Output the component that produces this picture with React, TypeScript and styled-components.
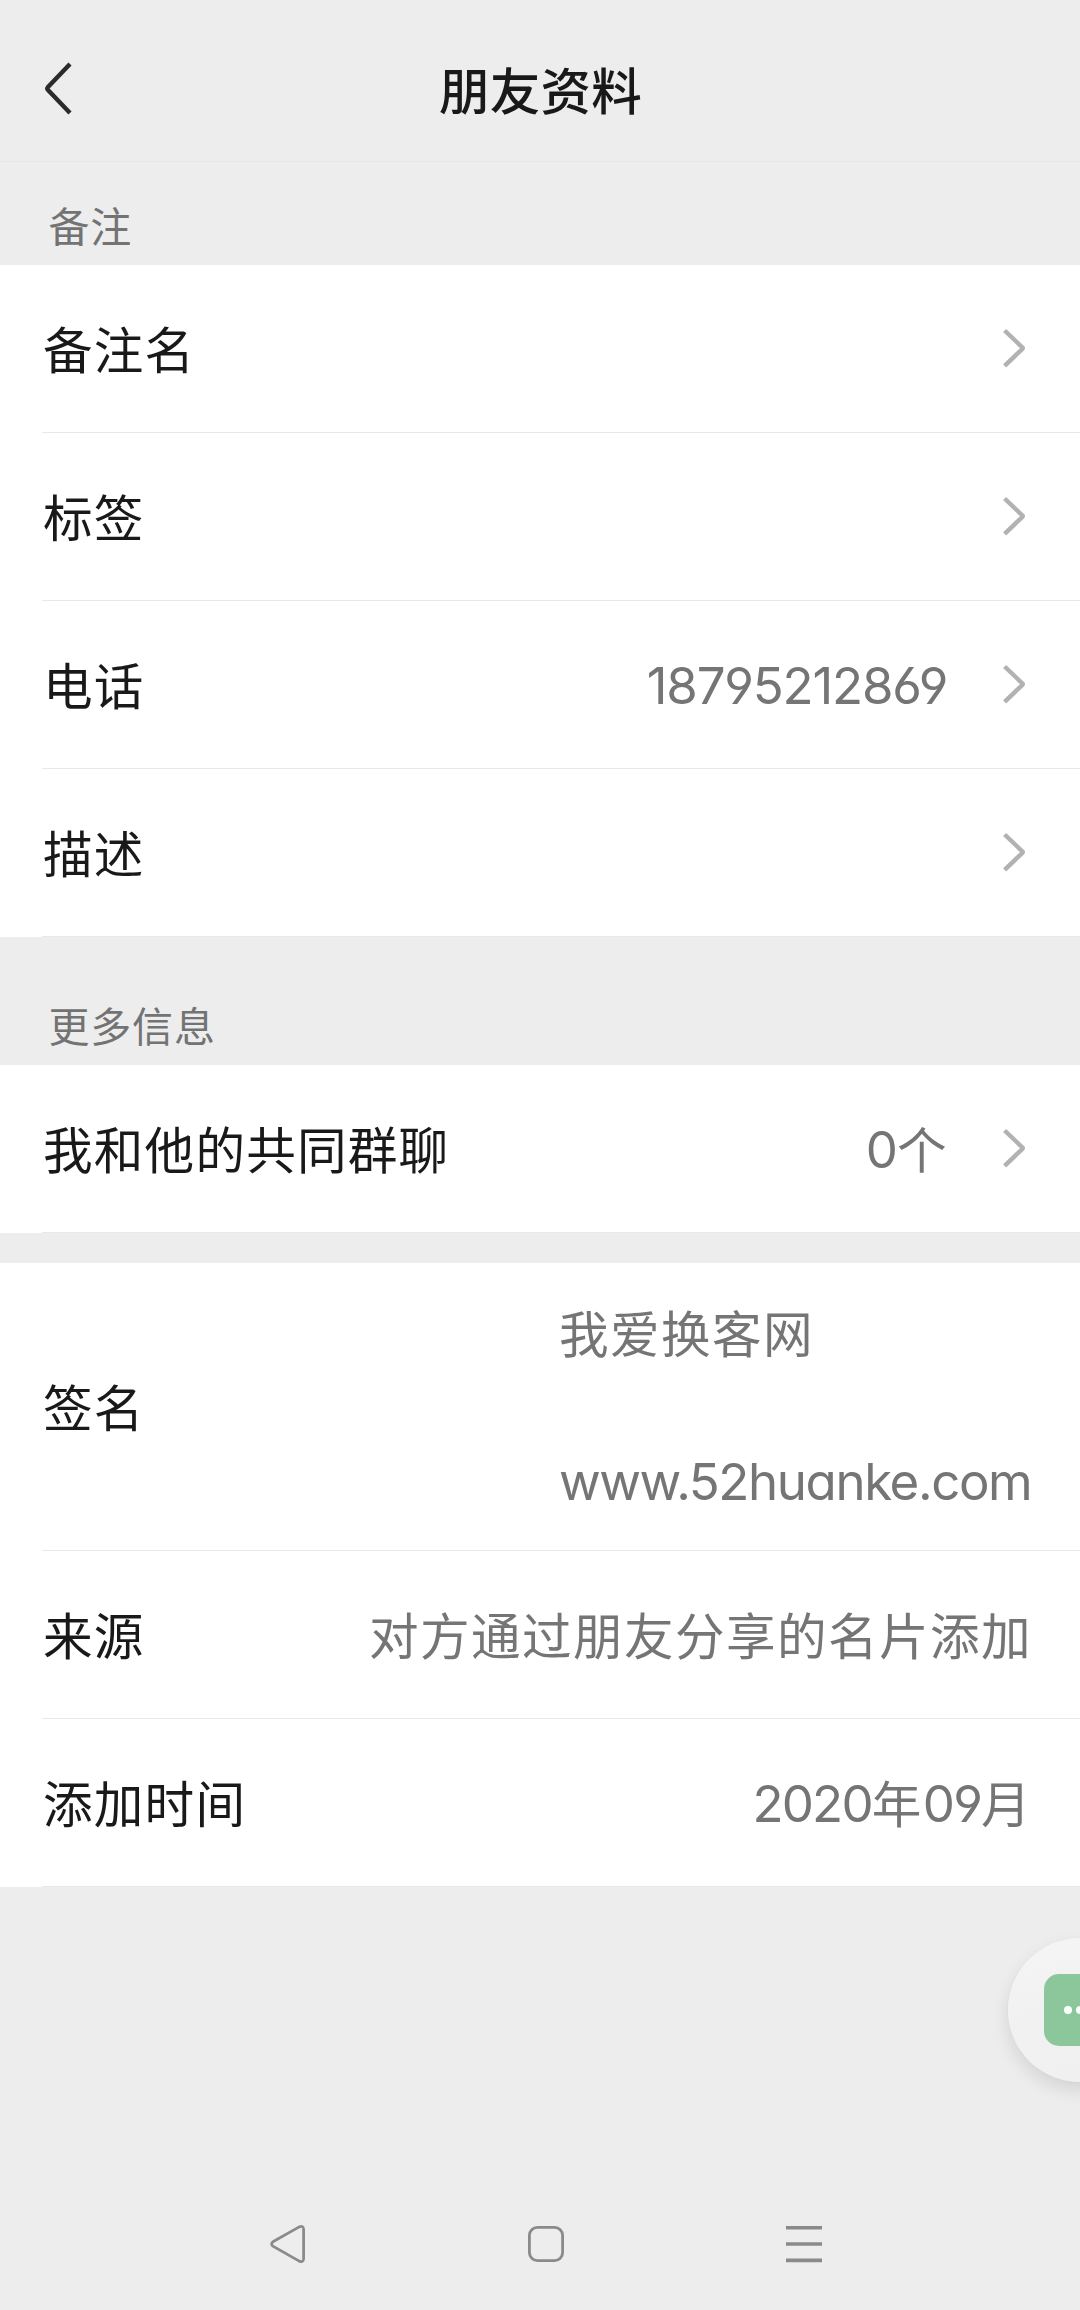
import React from "react";
import styled, { createGlobalStyle } from "styled-components";

const GlobalStyle = createGlobalStyle`
  * { box-sizing: border-box; }
  body {
    margin: 0;
    background: #ededed;
    font-family: "Noto Sans CJK SC", "Noto Sans", sans-serif;
  }
`;

const Screen = styled.div`
  position: relative;
  display: flex;
  flex-direction: column;
  width: 1080px;
  height: 2310px;
  overflow: hidden;
  background: #ededed;
  color: #191919;
`;

const Header = styled.header`
  display: grid;
  grid-template-columns: 120px 1fr 120px;
  align-items: center;
  height: 162px;
  padding-top: 17px;
  border-bottom: 1px solid #e6e6e6;
`;

const BackButton = styled.button`
  display: flex;
  width: 120px;
  height: 72px;
  padding: 0 0 0 42px;
  border: 0;
  background: none;
  align-items: center;
`;

const Title = styled.h1`
  margin: 0 0 0 1px;
  padding-bottom: 2px;
  text-align: center;
  font-size: 50.5px;
  font-weight: 500;
  line-height: 72px;
  letter-spacing: 0.3px;
`;

const SectionLabel = styled.h2<{ $height: number }>`
  display: flex;
  align-items: flex-end;
  height: ${(p) => p.$height}px;
  margin: 0;
  padding: 0 0 12px 48.5px;
  font-size: 41px;
  font-weight: 400;
  line-height: 58px;
  letter-spacing: 0.8px;
  color: #737373;
`;

const Group = styled.section<{ $gap?: number }>`
  margin-top: ${(p) => p.$gap ?? 0}px;
  background: #fff;
`;

const Row = styled.div<{ $height?: number; $link?: boolean }>`
  display: flex;
  justify-content: space-between;
  height: ${(p) => p.$height ?? 168}px;
  margin-left: 42px;
  padding-left: 1px;
  padding-right: ${(p) => (p.$link ? 54 : 48)}px;
  align-items: center;
  border-bottom: 1px solid #e8e8e8;
`;

const Label = styled.span`
  padding-bottom: 4px;
  font-size: 49.6px;
  line-height: 72px;
  letter-spacing: 1.2px;
`;

const Side = styled.div`
  display: flex;
  align-items: center;
  gap: 54px;
`;

const Value = styled.span`
  padding-bottom: 4px;
  font-size: 49.6px;
  line-height: 72px;
  letter-spacing: 1.4px;
  color: #757575;
`;

const Latin = styled.span<{ $track?: number; $end?: number }>`
  margin-right: ${(p) => p.$end ?? 0}px;
  font-family: Inter, "Noto Sans", sans-serif;
  font-size: 51px;
  font-weight: 370;
  line-height: 1;
  vertical-align: 1px;
  font-feature-settings: "cv11" 1, "ss01" 1;
  letter-spacing: ${(p) => p.$track ?? -1.8}px;
`;

const Signature = styled.div`
  display: flex;
  flex-direction: column;
  gap: 72px;
`;

const Bubble = styled.div`
  position: absolute;
  top: 1938px;
  left: 1008px;
  display: flex;
  align-items: center;
  justify-content: center;
  width: 144px;
  height: 144px;
  border-radius: 50%;
  background: linear-gradient(160deg, #f5f5f5 0%, #f0f1f0 45%, #f0f0f0 100%);
  box-shadow: 0 8px 18px rgba(0, 0, 0, 0.11), 0 0 2px rgba(0, 0, 0, 0.04);
`;

const BubbleIcon = styled.div`
  display: flex;
  align-items: center;
  justify-content: center;
  gap: 4px;
  width: 72px;
  height: 72px;
  border-radius: 15px;
  background: #8cc79b;
`;

const Dot = styled.i`
  width: 8px;
  height: 8px;
  border-radius: 50%;
  background: #fafffb;
`;

const NavBar = styled.nav`
  display: flex;
  justify-content: space-between;
  align-items: center;
  height: 132px;
  margin-top: auto;
  padding: 0 256px 0 268px;
`;

const Chevron = () => (
  <svg width="24" height="42" viewBox="0 0 24 42" fill="none" stroke="#b2b2b2" strokeWidth="4.4">
    <path d="M2.6 2.5 L20.4 19.5 Q21.2 20.2 20.4 20.9 L2.6 37.9" />
  </svg>
);

type ItemProps = { label: string; children?: React.ReactNode; link?: boolean; height?: number };

const Item = ({ label, children, link, height }: ItemProps) => (
  <Row $height={height} $link={link}>
    <Label>{label}</Label>
    <Side>
      {children}
      {link && <Chevron />}
    </Side>
  </Row>
);

export default function App() {
  return (
    <>
      <GlobalStyle />
      <Screen>
        <Header>
          <BackButton aria-label="返回">
            <svg width="32" height="54" viewBox="0 0 32 54" fill="none" stroke="#2b2b2b" strokeWidth="4.4">
              <path d="M28 2 L5.8 25.3 Q4.8 26.5 5.8 27.7 L28 51" />
            </svg>
          </BackButton>
          <Title>朋友资料</Title>
        </Header>

        <SectionLabel $height={103}>备注</SectionLabel>
        <Group>
          <Item label="备注名" link />
          <Item label="标签" link />
          <Item label="电话" link>
            <Value><Latin $track={-1.2} $end={0.8}>18795212869</Latin></Value>
          </Item>
          <Item label="描述" link />
        </Group>

        <SectionLabel $height={128}>更多信息</SectionLabel>
        <Group>
          <Item label="我和他的共同群聊" link>
            <Value><Latin $track={-1}>0</Latin>个</Value>
          </Item>
        </Group>

        <Group $gap={30}>
          <Item label="签名" height={288}>
            <Signature>
              <Value>我爱换客网</Value>
              <Value><Latin $track={-1.4} $end={0.6}>www.52huanke.com</Latin></Value>
            </Signature>
          </Item>
          <Item label="来源">
            <Value>对方通过朋友分享的名片添加</Value>
          </Item>
          <Item label="添加时间">
            <Value><Latin>2020</Latin>年<Latin>09</Latin>月</Value>
          </Item>
        </Group>

        <NavBar>
          <svg width="40" height="40" viewBox="0 0 40 40" fill="none" stroke="#8a8a8a" strokeWidth="2.8">
            <path d="M4.9 17.8 L31.2 2.9 Q35.4 1.2 35.6 5.2 V34.8 Q35.4 38.8 31.2 37.1 L4.9 22.2 Q2.4 20 4.9 17.8 Z" />
          </svg>
          <svg width="40" height="40" viewBox="0 0 40 40" fill="none" stroke="#8a8a8a" strokeWidth="2.8">
            <rect x="3.4" y="3.4" width="33.2" height="33.2" rx="8" />
          </svg>
          <svg width="40" height="40" viewBox="0 0 40 40" fill="none" stroke="#8a8a8a" strokeWidth="3.6">
            <path d="M2 3.7 H38 M2 20 H38 M2 36.4 H38" />
          </svg>
        </NavBar>

        <Bubble>
          <BubbleIcon><Dot /><Dot /><Dot /></BubbleIcon>
        </Bubble>
      </Screen>
    </>
  );
}
